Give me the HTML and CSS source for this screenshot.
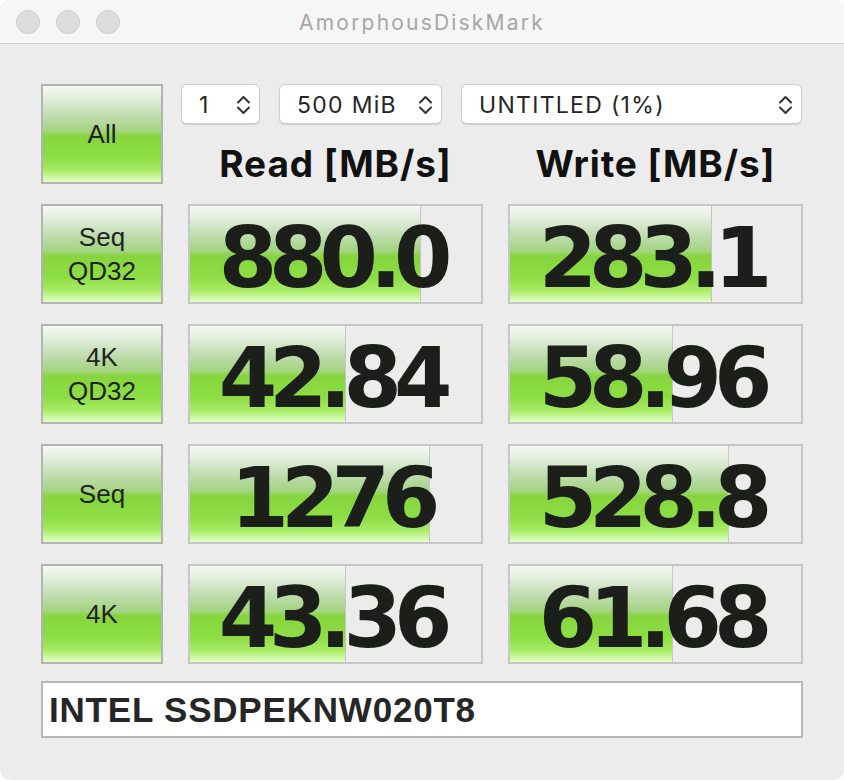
FILE: index.html
```html
<!DOCTYPE html>
<html lang="en">
<head>
    <meta charset="UTF-8">
    <meta name="viewport" content="width=device-width, initial-scale=1.0">
    <title>AmorphousDiskMark</title>
    <link rel="stylesheet" href="styles.css">
</head>
<body>
    <div class="window">
        <!-- Title bar -->
        <div class="titlebar">
            <div class="lights">
                <span class="light"></span>
                <span class="light"></span>
                <span class="light"></span>
            </div>
            <div class="title">AmorphousDiskMark</div>
        </div>

        <div class="content">
            <div class="grid">
                <button class="test-btn">All</button>

                <div class="top">
                    <div class="selects">
                        <div class="select sel-count">
                            <span>1</span>
                            <svg class="chev" viewBox="0 0 15 22"><polyline points="2,8.5 7.5,3 13,8.5"/><polyline points="2,13.5 7.5,19 13,13.5"/></svg>
                        </div>
                        <div class="select sel-size">
                            <span>500 MiB</span>
                            <svg class="chev" viewBox="0 0 15 22"><polyline points="2,8.5 7.5,3 13,8.5"/><polyline points="2,13.5 7.5,19 13,13.5"/></svg>
                        </div>
                        <div class="select sel-disk">
                            <span>UNTITLED (1%)</span>
                            <svg class="chev" viewBox="0 0 15 22"><polyline points="2,8.5 7.5,3 13,8.5"/><polyline points="2,13.5 7.5,19 13,13.5"/></svg>
                        </div>
                    </div>
                    <div class="headers">
                        <h2>Read [MB/s]</h2>
                        <h2>Write [MB/s]</h2>
                    </div>
                </div>

                <!-- Seq QD32 -->
                <button class="test-btn">Seq<br>QD32</button>
                <div class="result" style="--w: 79.4%">880.0</div>
                <div class="result" style="--w: 69.4%">283.1</div>

                <!-- 4K QD32 -->
                <button class="test-btn">4K<br>QD32</button>
                <div class="result" style="--w: 53.3%">42.84</div>
                <div class="result" style="--w: 55.7%">58.96</div>

                <!-- Seq -->
                <button class="test-btn">Seq</button>
                <div class="result" style="--w: 82.5%">1276</div>
                <div class="result" style="--w: 75.3%">528.8</div>

                <!-- 4K -->
                <button class="test-btn">4K</button>
                <div class="result" style="--w: 53.3%">43.36</div>
                <div class="result" style="--w: 55.7%">61.68</div>
            </div>

            <div class="model">INTEL SSDPEKNW020T8</div>
        </div>
    </div>
</body>
</html>
```

FILE: styles.css
```css
*{
    margin: 0;
    padding: 0;
    box-sizing: border-box;
}

body{
    background: #ffffff;
    font-family: "Liberation Sans", Arial, sans-serif;
}

.window{
    width: 844px;
    height: 780px;
    background: #ececec;
    border-radius: 10px;
    overflow: hidden;
}

/* title bar */
.titlebar{
    height: 44px;
    background: #f6f6f6;
    border-bottom: 1px solid #d2d2d2;
    display: grid;
    grid-template-columns: 1fr auto 1fr;
    align-items: center;
}

.lights{
    display: flex;
    gap: 16px;
    padding-left: 16px;
}

.light{
    width: 24px;
    height: 24px;
    border-radius: 50%;
    background: #dcdcdc;
    border: 1px solid #cecece;
}

.title{
    font-family: "Inter", "Noto Sans", sans-serif;
    font-size: 21px;
    letter-spacing: 2.2px;
    color: #a6a6a6;
    padding-top: 1px;
}

/* main area */
.content{
    padding: 40px 41px 0 41px;
}

.grid{
    display: grid;
    grid-template-columns: 122px 295px 295px;
    grid-auto-rows: 100px;
    column-gap: 25px;
    row-gap: 20px;
}

.test-btn{
    background: linear-gradient(to bottom, #f6f8f4 0%, #e4efdf 12%, #c0ddb0 30%, #a3d480 47%, #86d53e 52%, #8ddd44 74%, #a9ec66 88%, #e3ffc8 100%);
    border: 2px solid #b2b2b2;
    font-family: "Liberation Sans", Arial, sans-serif;
    font-size: 26px;
    line-height: 34px;
    color: #222;
    cursor: pointer;
}

.top{
    grid-column: 2 / 4;
    display: flex;
    flex-direction: column;
}

.selects{
    flex: none;
    display: flex;
    gap: 19px;
    height: 40px;
    margin: 0 1px 0 -7px;
}

.select{
    display: flex;
    align-items: center;
    justify-content: space-between;
    background: #fff;
    border: 1px solid #cdcdcd;
    border-radius: 6px;
    box-shadow: 0 1px 1px rgba(0,0,0,0.12);
    padding: 1px 8px 0 17px;
    font-family: "Inter", "Noto Sans", sans-serif;
    font-size: 23px;
    letter-spacing: 1.3px;
    color: #262626;
}

.sel-count{ width: 79px; }
.sel-size{ width: 163px; }
.sel-disk{ flex: 1; }

.chev{
    width: 15px;
    height: 22px;
    fill: none;
    stroke: #333;
    stroke-width: 2;
    stroke-linecap: round;
    stroke-linejoin: round;
}

.headers{
    flex: 1;
    display: grid;
    grid-template-columns: 295px 295px;
    column-gap: 25px;
    align-items: end;
}

.headers h2{
    text-align: center;
    font-family: "Inter", "Noto Sans", sans-serif;
    font-weight: 700;
    font-size: 37px;
    line-height: 40px;
    letter-spacing: 0.9px;
    color: #111;
}

/* result cells */
.result{
    border: 2px solid #c6c6c6;
    display: flex;
    align-items: center;
    justify-content: center;
    padding: 7px 8px 0 0;
    font-family: "DejaVu Sans", Verdana, sans-serif;
    font-weight: 700;
    font-size: 84px;
    letter-spacing: -8px;
    color: #1c1e1a;
    background:
        linear-gradient(#c4c4c4, #c4c4c4) var(--w) 0 / 1px 100% no-repeat,
        linear-gradient(to bottom, #f6f8f4 0%, #e4efdf 12%, #c0ddb0 30%, #a3d480 47%, #86d53e 52%, #8ddd44 74%, #a9ec66 88%, #e3ffc8 100%) 0 0 / var(--w) 100% no-repeat,
        #ececec;
}

.model{
    margin-top: 17px;
    height: 57px;
    border: 2px solid #b8b8b8;
    background: #fff;
    display: flex;
    align-items: center;
    padding-left: 6px;
    font-weight: 700;
    font-size: 35px;
    letter-spacing: 0.8px;
    color: #262626;
}
```
